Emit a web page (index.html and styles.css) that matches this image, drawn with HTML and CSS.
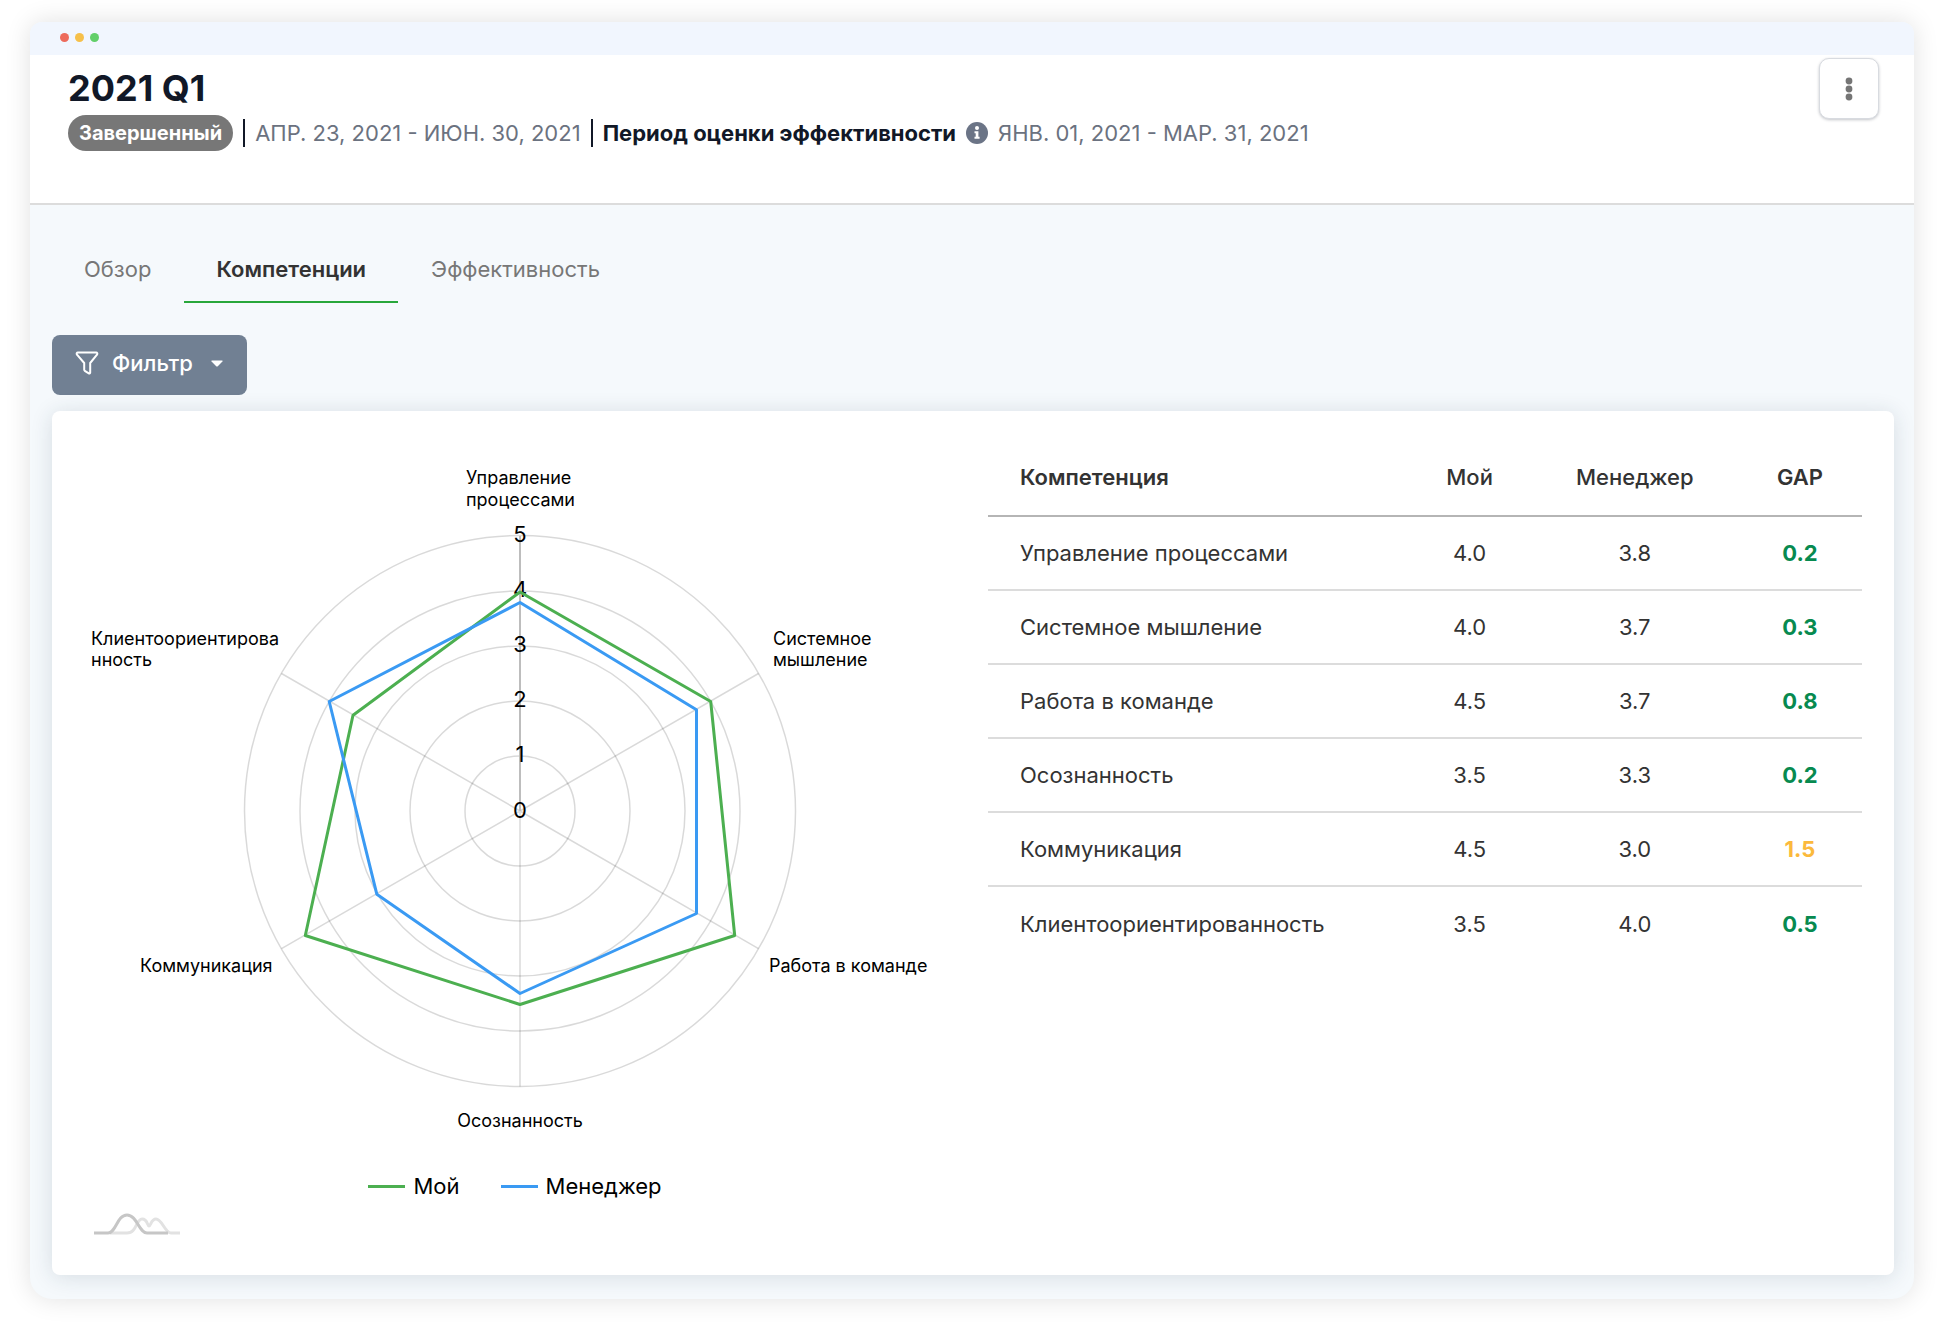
FILE: index.html
```html
<!DOCTYPE html>
<html lang="ru">
<head>
<meta charset="utf-8">
<meta name="viewport" content="width=device-width, initial-scale=1">
<title>2021 Q1</title>
<link rel="stylesheet" href="styles.css">
</head>
<body>
<div class="window">
  <div class="titlebar">
    <span class="dot dot-red"></span>
    <span class="dot dot-yellow"></span>
    <span class="dot dot-green"></span>
  </div>

  <header class="header">
    <div class="header-text">
      <h1 class="title">2021 Q1</h1>
      <div class="meta">
        <span class="badge">Завершенный</span>
        <span class="bar"></span>
        <span class="date">АПР. 23, 2021 - ИЮН. 30, 2021</span>
        <span class="bar"></span>
        <strong class="period">Период оценки эффективности</strong>
        <svg class="info" viewBox="0 0 22 22" aria-hidden="true">
          <circle cx="11" cy="11" r="11" fill="#6b7486"/>
          <circle cx="11" cy="6" r="2" fill="#fff"/>
          <path d="M8.5 9.2h3.9v5.6h1.2v2H8.5v-2h1.2v-3.6H8.5z" fill="#fff"/>
        </svg>
        <span class="date">ЯНВ. 01, 2021 - МАР. 31, 2021</span>
      </div>
    </div>
    <button class="menu-button" type="button" aria-label="Меню">
      <svg class="menu-icon" viewBox="0 0 8 24" aria-hidden="true">
        <circle cx="4" cy="4" r="3.4"/><circle cx="4" cy="12" r="3.4"/><circle cx="4" cy="20" r="3.4"/>
      </svg>
    </button>
  </header>

  <main class="content">
    <nav class="tabs">
      <a class="tab" href="#overview">Обзор</a>
      <a class="tab tab-active" href="#competencies" aria-current="page">Компетенции</a>
      <a class="tab" href="#performance">Эффективность</a>
    </nav>

    <button class="filter" type="button">
      <svg class="funnel" viewBox="0 0 24 24" aria-hidden="true">
        <path d="M3 1.5h18a1.3 1.3 0 0 1 1 2.2L15.2 12v9.6a.9.9 0 0 1-1.4.8l-4-2.6a1.2 1.2 0 0 1-.6-1V12L2 3.7a1.3 1.3 0 0 1 1-2.2z" fill="none" stroke="#fff" stroke-width="2" stroke-linejoin="round"/>
      </svg>
      <span>Фильтр</span>
      <svg class="caret" viewBox="0 0 12 7" aria-hidden="true"><path d="M1 .5h10q1 0 .4.9L6.8 6.2q-.8.8-1.6 0L.6 1.4Q0 .5 1 .5z" fill="#fff"/></svg>
    </button>

    <section class="card">
      <div class="chart">
        <svg class="radar" viewBox="0 0 936 753" role="img" aria-label="Диаграмма компетенций">
          <g class="grid">
            <circle cx="468" cy="400" r="55"/>
            <circle cx="468" cy="400" r="110"/>
            <circle cx="468" cy="400" r="165"/>
            <circle cx="468" cy="400" r="220"/>
            <circle cx="468" cy="400" r="275.500"/>
            <path d="M468 400V675.500M468 400L706.500 262.500M468 400L706.500 537.700M468 400L229.500 537.700M468 400L229.500 262.500"/>
          </g>
          <path class="axis" d="M468 400V125"/>
          <g class="ticks">
            <text x="468" y="407">0</text>
            <text x="468" y="351">1</text>
            <text x="468" y="296">2</text>
            <text x="468" y="241">3</text>
            <text x="468" y="186">4</text>
            <text x="468" y="131">5</text>
          </g>
          <path class="series series-own" d="M468 181L658.700 290.500L682.700 524.500L468 593.500L253.300 524.500L301 304.300Z"/>
          <path class="series series-manager" d="M468 191.500L644.500 298.700L644.500 502.500L468 582.500L324.800 483.200L277.200 290.500Z"/>
          <g class="labels">
            <text x="414" y="73">Управление</text>
            <text x="414" y="95">процессами</text>
            <text x="721" y="234">Системное</text>
            <text x="721" y="255">мышление</text>
            <text x="717" y="561">Работа в команде</text>
            <text x="468" y="716" text-anchor="middle">Осознанность</text>
            <text x="88" y="561">Коммуникация</text>
            <text x="39" y="234">Клиентоориентирова</text>
            <text x="39" y="255">нность</text>
          </g>
        </svg>
        <div class="legend">
          <span class="legend-item"><i class="line line-own"></i>Мой</span>
          <span class="legend-item"><i class="line line-manager"></i>Менеджер</span>
        </div>
        <svg class="chart-mark" viewBox="0 0 88 24" aria-hidden="true">
          <path d="M17 21H34C44 21 43 7 49 7S54 14 56 14S58 7 63 7C69 7 72 21 78 21H87" fill="none" stroke="#e2e2e2" stroke-width="3"/>
          <path d="M1 21H15C23 21 24 3 34 3S46 21 54 21H75" fill="none" stroke="#c6c6c6" stroke-width="3"/>
        </svg>
      </div>

      <div class="table-wrap">
        <table class="table">
          <thead>
            <tr><th class="name" scope="col">Компетенция</th><th class="own" scope="col">Мой</th><th class="manager" scope="col">Менеджер</th><th class="gap" scope="col">GAP</th></tr>
          </thead>
          <tbody>
            <tr><td class="name">Управление процессами</td><td>4.0</td><td>3.8</td><td class="good">0.2</td></tr>
            <tr><td class="name">Системное мышление</td><td>4.0</td><td>3.7</td><td class="good">0.3</td></tr>
            <tr><td class="name">Работа в команде</td><td>4.5</td><td>3.7</td><td class="good">0.8</td></tr>
            <tr><td class="name">Осознанность</td><td>3.5</td><td>3.3</td><td class="good">0.2</td></tr>
            <tr><td class="name">Коммуникация</td><td>4.5</td><td>3.0</td><td class="warn">1.5</td></tr>
            <tr><td class="name">Клиентоориентированность</td><td>3.5</td><td>4.0</td><td class="good">0.5</td></tr>
          </tbody>
        </table>
      </div>
    </section>
  </main>
</div>
</body>
</html>
```
FILE: styles.css
```css
* { box-sizing: border-box; }

body {
  margin: 0;
  padding: 22px 30px 30px;
  background: #fff;
  color: #333;
  font-family: Inter, "Liberation Sans", sans-serif;
  font-size: 22px;
  line-height: 28px;
}

button { font: inherit; cursor: pointer; }

.window {
  border-radius: 12px 12px 22px 22px;
  background: #f5f9fc;
  box-shadow: 0 0 26px rgba(0, 0, 0, 0.12);
}

.titlebar {
  display: flex;
  align-items: center;
  gap: 6px;
  height: 33px;
  padding: 0 30px 2px;
  border-radius: 12px 12px 0 0;
  background: #f1f6fe;
}
.dot { width: 9px; height: 9px; border-radius: 50%; }
.dot-red { background: #ed6b5c; }
.dot-yellow { background: #f6c04a; }
.dot-green { background: #62cf69; }

.header {
  display: flex;
  justify-content: space-between;
  align-items: flex-start;
  padding: 3px 35px 52px 38px;
  border-bottom: 2px solid #dcdcdc;
  background: #fff;
}
.header-text { padding-top: 8px; }
.title {
  margin: 0 0 5px;
  color: #111827;
  font-size: 36px;
  font-weight: 700;
  line-height: 44px;
}
.meta {
  display: flex;
  flex-wrap: wrap;
  align-items: center;
  color: #111827;
}
.badge {
  padding: 4px 11px;
  border-radius: 18px;
  background: #777;
  color: #fff;
  font-size: 20px;
  font-weight: 700;
}
.bar { width: 2px; height: 28px; margin: 0 10px; background: #111827; }
.date { color: #6b7280; }
.period { font-weight: 700; }
.info { width: 22px; height: 22px; margin: 0 10px; }

.menu-button {
  display: grid;
  place-items: center;
  width: 60px;
  height: 61px;
  padding: 0;
  border: 1px solid #d8dbe0;
  border-radius: 10px;
  background: #fff;
  box-shadow: 0 1px 3px rgba(17, 24, 39, 0.25);
}
.menu-icon { width: 8px; height: 24px; fill: #757575; }

.content { padding: 34px 20px 24px 22px; }

.tabs { display: flex; gap: 1px; margin-bottom: 32px; }
.tab {
  padding: 16px 32px 18px;
  border-bottom: 2px solid transparent;
  color: #777;
  text-decoration: none;
}
.tab-active { border-color: #28a73b; color: #333; font-weight: 600; }

.filter {
  display: flex;
  align-items: center;
  height: 60px;
  margin-bottom: 16px;
  padding: 0 24px 4px 23px;
  border: 0;
  border-radius: 8px;
  background: #718093;
  color: #fff;
  font-weight: 500;
}
.funnel { width: 24px; height: 24px; margin-right: 13px; }
.caret { width: 12px; height: 7px; margin-left: 18px; }

.card {
  display: grid;
  grid-template-columns: minmax(0, 936fr) minmax(0, 906fr);
  border-radius: 8px;
  background: #fff;
  box-shadow: 0 2px 22px rgba(30, 50, 70, 0.14);
}

.chart { padding-bottom: 39px; }
.radar { display: block; width: 100%; height: auto; }
.radar text { font-family: Inter, "Liberation Sans", sans-serif; fill: #000; }
.grid { fill: none; stroke: #000; stroke-opacity: 0.15; stroke-width: 1.5; }
.axis { stroke: #bdbdbd; stroke-width: 2; }
.ticks { font-size: 22px; text-anchor: middle; }
.labels { font-size: 18px; }
.series { fill: none; stroke-width: 3; stroke-linejoin: round; }
.series-own { stroke: #4caf50; }
.series-manager { stroke: #3a9af3; }

.legend {
  display: flex;
  justify-content: center;
  gap: 41px;
  padding: 8px 10px 12px 0;
  color: #000;
}
.legend-item { display: flex; align-items: center; gap: 8px; }
.line { width: 37px; height: 3px; }
.line-own { background: #4caf50; }
.line-manager { background: #3a9af3; }
.chart-mark { display: block; width: 88px; height: 24px; margin-left: 41px; }

.table-wrap { padding: 30px 32px 0 0; }
.table { width: 100%; border-collapse: collapse; table-layout: fixed; }
.table th, .table td {
  height: 74px;
  padding: 0;
  border-bottom: 2px solid #dcdcdc;
  font-weight: 400;
  text-align: center;
}
.table thead th {
  height: 75px;
  padding-bottom: 3px;
  border-color: #b5b5b5;
  font-weight: 500;
}
.table tbody tr:last-child td { border-bottom: 0; }
.table .name { padding-left: 32px; text-align: left; }
.table thead .name, .table thead .gap { font-weight: 600; }
.own, .gap { width: 14.2%; }
.manager { width: 23.6%; }
.table .good, .table .warn { color: #078a50; font-weight: 700; }
.table .warn { color: #fbb93c; }
```
